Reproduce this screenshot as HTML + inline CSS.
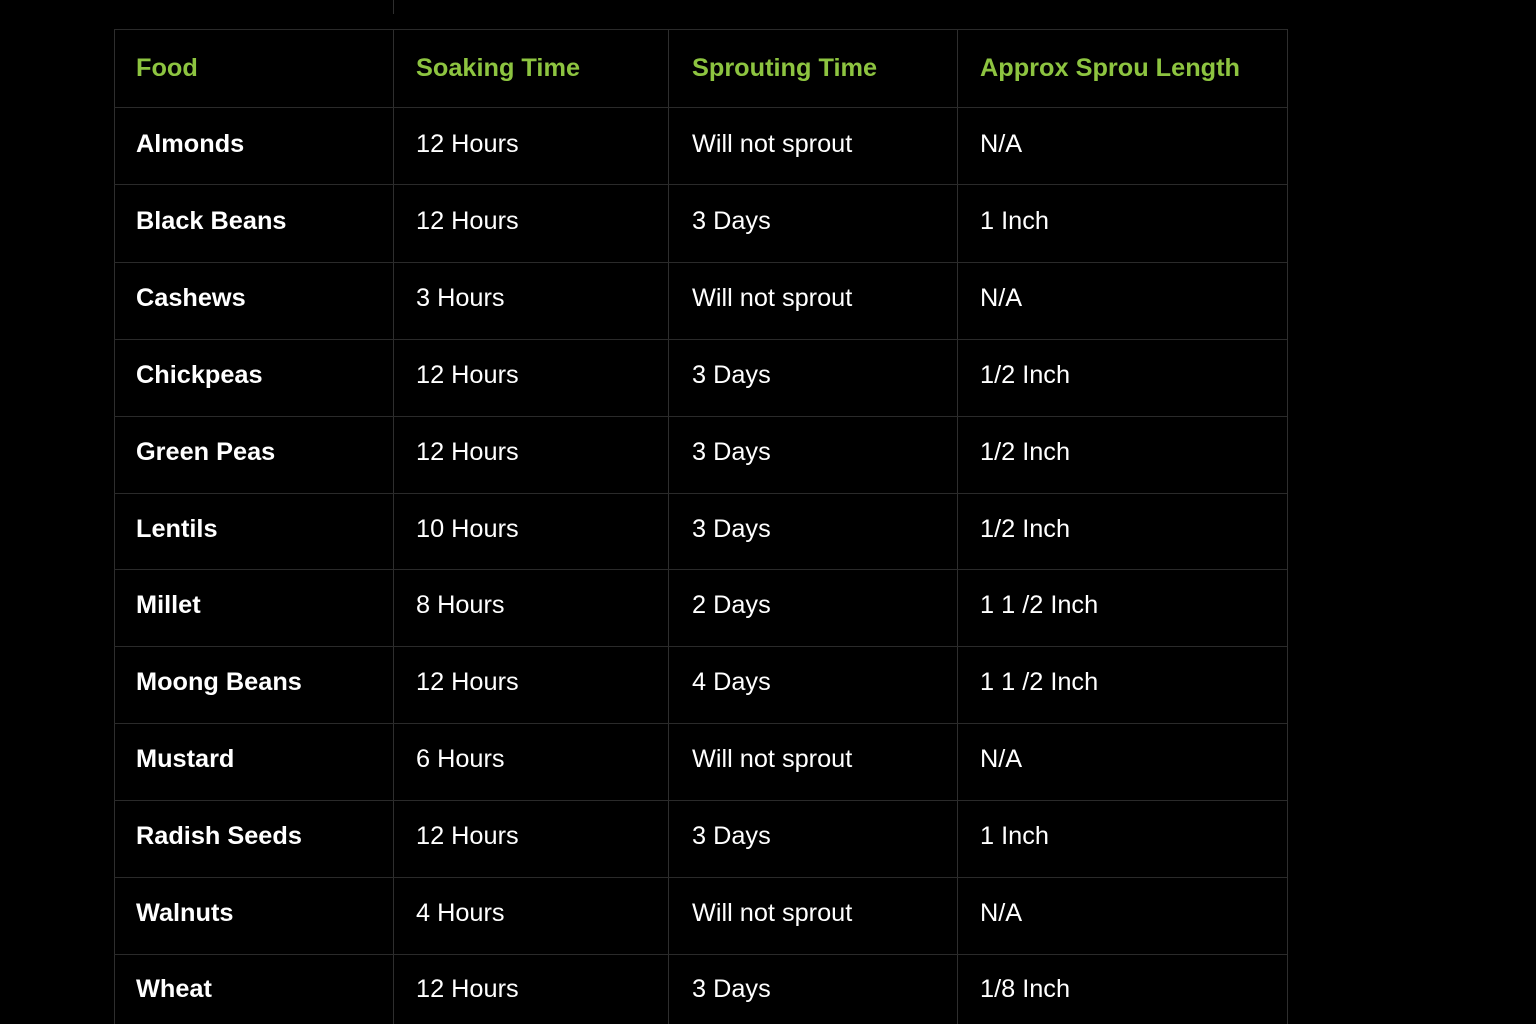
<!DOCTYPE html>
<html><head><style>
body{margin:0;background:#000;width:1536px;height:1024px;overflow:hidden;font-family:"Liberation Sans",Arial,sans-serif;}
.v{position:absolute;width:1px;background:#2e2e2e}
.h{position:absolute;height:1px;background:#2a2a2a;left:114px;width:1173px}
.t{position:absolute;font-size:25.3px;color:#fff;line-height:30px;white-space:nowrap}
.b{font-weight:bold}
.g{color:#8dc440;font-weight:bold}
</style></head><body>
<div class="v" style="left:393px;top:0;height:14px"></div>
<div class="v" style="left:114px;top:29px;height:995px"></div>
<div class="v" style="left:393px;top:29px;height:995px"></div>
<div class="v" style="left:668px;top:29px;height:995px"></div>
<div class="v" style="left:957px;top:29px;height:995px"></div>
<div class="v" style="left:1287px;top:29px;height:995px"></div>
<div id="c"></div>
<script>
var rows=[["Food","Soaking Time","Sprouting Time","Approx Sprou Length"],
["Almonds","12 Hours","Will not sprout","N/A"],
["Black Beans","12 Hours","3 Days","1 Inch"],
["Cashews","3 Hours","Will not sprout","N/A"],
["Chickpeas","12 Hours","3 Days","1/2 Inch"],
["Green Peas","12 Hours","3 Days","1/2 Inch"],
["Lentils","10 Hours","3 Days","1/2 Inch"],
["Millet","8 Hours","2 Days","1 1 /2 Inch"],
["Moong Beans","12 Hours","4 Days","1 1 /2 Inch"],
["Mustard","6 Hours","Will not sprout","N/A"],
["Radish Seeds","12 Hours","3 Days","1 Inch"],
["Walnuts","4 Hours","Will not sprout","N/A"],
["Wheat","12 Hours","3 Days","1/8 Inch"]];
var xs=[136,416,692,980],h="";
var lines=[29,107,184,262,339,416,493,569,646,723,800,877,954];
lines.forEach(function(y){h+='<div class="h" style="top:'+y+'px"></div>';});
rows.forEach(function(r,i){
 var cy=[67,143,220,297,374,451,528,604,681,758,835,912,988][i];
 r.forEach(function(s,j){
  var cls=i==0?"t g":(j==0?"t b":"t");
  h+='<div class="'+cls+'" style="left:'+xs[j]+'px;top:'+(cy-14)+'px">'+s+'</div>';
 });
});
document.getElementById("c").innerHTML=h;
</script>
</body></html>
